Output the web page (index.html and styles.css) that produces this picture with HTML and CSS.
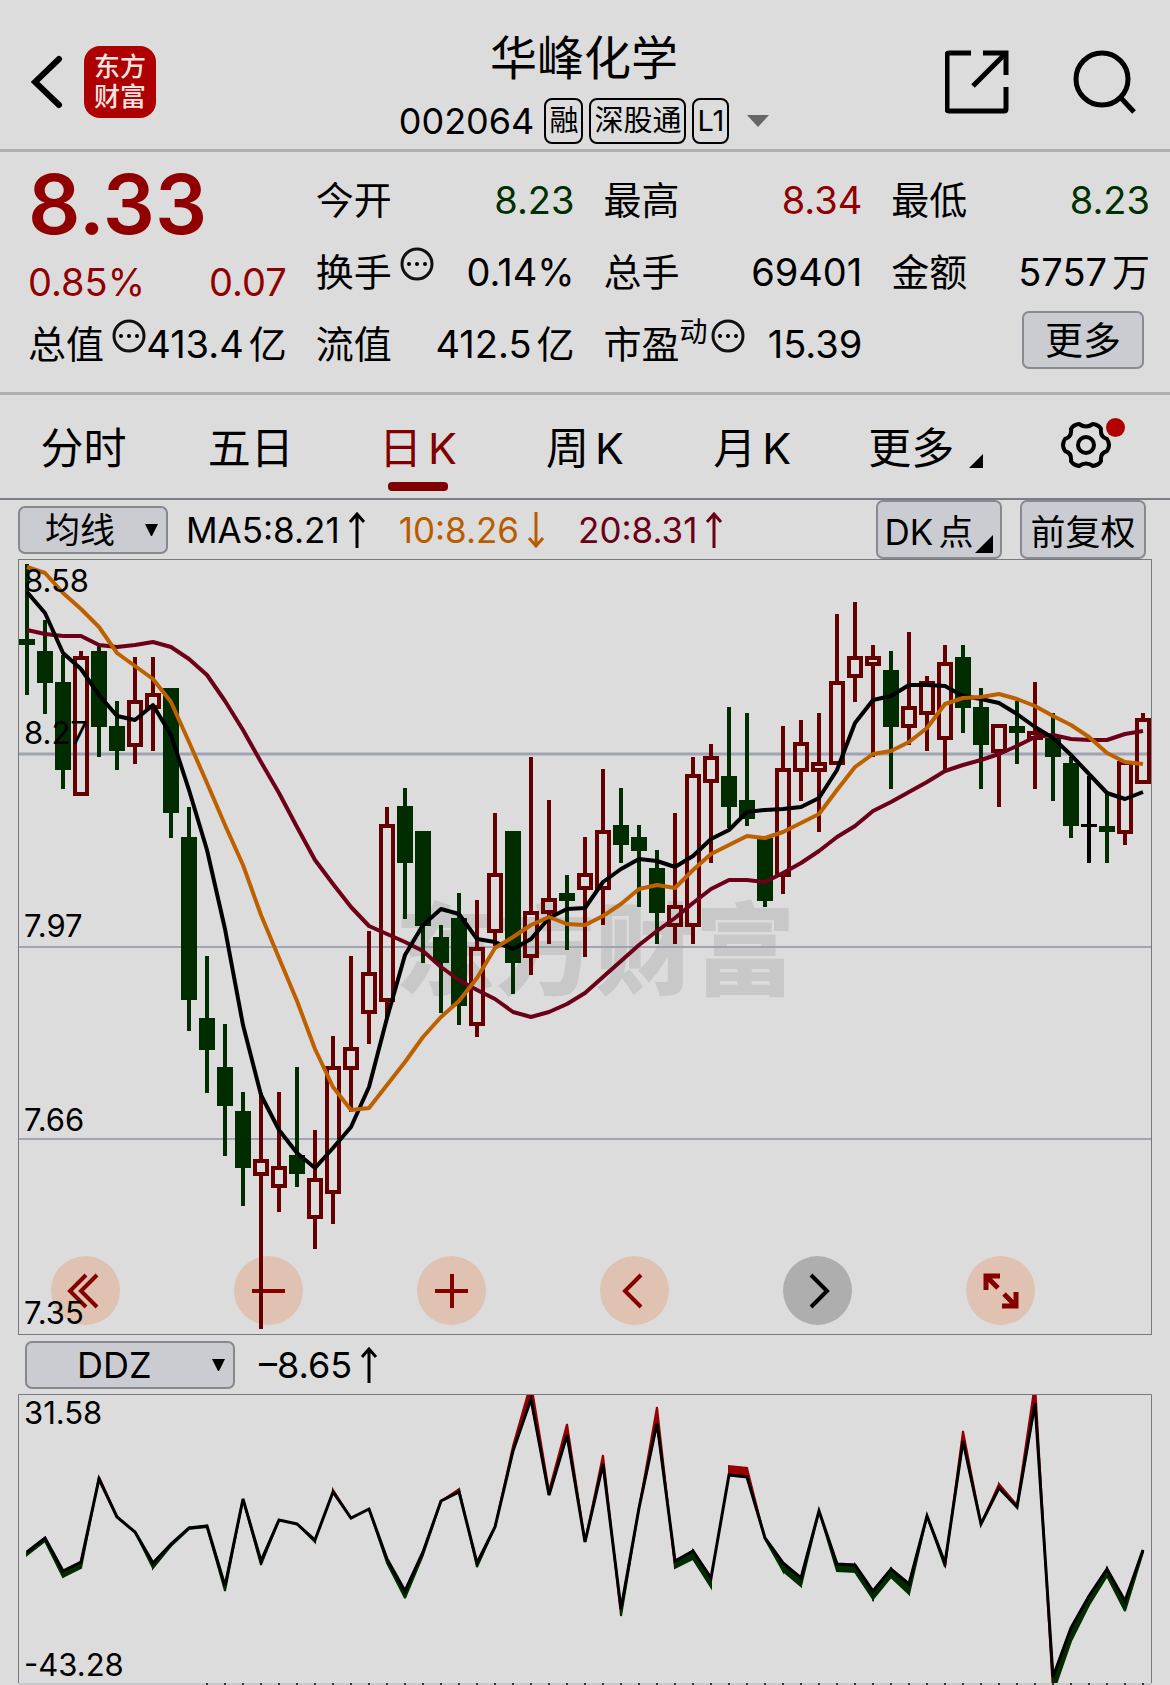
FILE: index.html
```html
<!DOCTYPE html>
<html lang="zh-CN">
<head>
    <meta charset="UTF-8">
    <meta name="viewport" content="width=device-width, initial-scale=1.0">
    <title>华峰化学 002064</title>
    <link rel="stylesheet" href="styles.css">
</head>
<body>

<header class="header">
    <div class="header-left">
        <button class="icon-btn" aria-label="返回">
            <svg width="32" height="54" viewBox="0 0 32 54"><path d="M28 4L4 27L28 50" fill="none" stroke="#000" stroke-width="6" stroke-linecap="round"/></svg>
        </button>
        <div class="logo">东方<br>财富</div>
    </div>
    <div class="header-title">
        <h1>华峰化学</h1>
        <div class="code-row">
            <span class="code">002064</span>
            <span class="tag">融</span>
            <span class="tag">深股通</span>
            <span class="tag">L1</span>
            <svg class="caret" width="22" height="12" viewBox="0 0 22 12"><path d="M0 0H22L11 12Z" fill="#666"/></svg>
        </div>
    </div>
    <div class="header-right">
        <button class="icon-btn" aria-label="分享">
            <svg width="64" height="64" viewBox="0 0 64 64"><path d="M26 3H4Q2 3 2 5V59Q2 61 4 61H59Q61 61 61 59V37M38 3H61V25M61 3L28 36" fill="none" stroke="#000" stroke-width="5"/></svg>
        </button>
        <button class="icon-btn" aria-label="搜索">
            <svg width="64" height="64" viewBox="0 0 64 64"><circle cx="29" cy="29" r="26" fill="none" stroke="#000" stroke-width="5"/><path d="M48 48L61 62" stroke="#000" stroke-width="5"/></svg>
        </button>
    </div>
</header>

<section class="quote">
    <div class="col">
        <div class="price red">8.33</div>
        <div class="cell change red"><span>0.85%</span><span>0.07</span></div>
        <div class="cell total"><span>总值</span><svg class="dots"><use href="#dots"/></svg><span class="val">413.4<i>亿</i></span></div>
    </div>
    <div class="col">
        <div class="cell"><span>今开</span><span class="val green">8.23</span></div>
        <div class="cell"><span>换手</span><svg class="dots"><use href="#dots"/></svg><span class="val">0.14%</span></div>
        <div class="cell"><span>流值</span><span class="val">412.5<i>亿</i></span></div>
    </div>
    <div class="col">
        <div class="cell"><span>最高</span><span class="val red">8.34</span></div>
        <div class="cell"><span>总手</span><span class="val">69401</span></div>
        <div class="cell"><span>市盈</span><sup>动</sup><svg class="dots tight"><use href="#dots"/></svg><span class="val">15.39</span></div>
    </div>
    <div class="col">
        <div class="cell"><span>最低</span><span class="val green">8.23</span></div>
        <div class="cell"><span>金额</span><span class="val">5757<i>万</i></span></div>
        <div class="cell"><button class="btn more">更多</button></div>
    </div>
</section>

<nav class="tabs">
    <button>分时</button>
    <button>五日</button>
    <button class="active">日<i>K</i></button>
    <button>周<i>K</i></button>
    <button>月<i>K</i></button>
    <button class="has-corner">更多<svg class="corner" viewBox="0 0 14 14"><path d="M14 0V14H0Z"/></svg></button>
    <button class="settings" aria-label="设置">
        <svg width="50" height="50" viewBox="0 0 50 50" fill="none" stroke="#000" stroke-width="4">
            <path d="M18 4Q25 9 32 4Q38 5 40 9Q39 17 46 19Q50 25 46 31Q39 33 40 41Q38 45 32 46Q25 41 18 46Q12 45 10 41Q11 33 4 31Q0 25 4 19Q11 17 10 9Q12 5 18 4Z" stroke-linejoin="round"/>
            <circle cx="25" cy="25" r="8"/>
        </svg>
        <span class="badge"></span>
    </button>
</nav>

<div class="toolbar">
    <div class="select ma-select">
        <select aria-label="主图指标"><option>均线</option></select>
        <svg width="13" height="12" viewBox="0 0 13 12"><path d="M0 0H13L7 12H6Z"/></svg>
    </div>
    <span class="ma">MA5:8.21<svg class="arrow"><use href="#up"/></svg></span>
    <span class="ma orange">10:8.26<svg class="arrow"><use href="#down"/></svg></span>
    <span class="ma crimson">20:8.31<svg class="arrow"><use href="#up"/></svg></span>
    <div class="toolbar-right">
        <button class="btn dk">DK<i>点</i><svg class="corner" viewBox="0 0 14 14"><path d="M14 0V14H0Z"/></svg></button>
        <button class="btn">前复权</button>
    </div>
</div>

<main>
    <div class="chart">
        <div class="controls">
            <button aria-label="最早"><svg viewBox="0 0 69 69"><path d="M35 19L19 35L35 51M46 19L30 35L46 51"/></svg></button>
            <button aria-label="缩小"><svg viewBox="0 0 69 69"><path d="M18 35H51"/></svg></button>
            <button aria-label="放大"><svg viewBox="0 0 69 69"><path d="M18 35H51M35 18V52"/></svg></button>
            <button aria-label="向前"><svg viewBox="0 0 69 69"><path d="M41 19L25 35L41 51"/></svg></button>
            <button class="off" aria-label="向后"><svg viewBox="0 0 69 69"><path d="M28 19L44 35L28 51"/></svg></button>
            <button class="full" aria-label="全屏"><svg viewBox="0 0 69 69"><path d="M20 34V20H34M20 20L32 32M50 36V50H36M50 50L38 38"/></svg></button>
        </div>
        <svg id="kline" viewBox="18 559 1134 776">
            <text class="watermark" x="395" y="987">东方财富</text>
            <g class="grid">
                <path d="M19 754H1151" stroke-width="3"/>
                <path d="M19 947H1151M19 1139H1151" stroke-width="2"/>
            </g>
            <g id="candles"></g>
            <g id="averages"></g>
            <g class="axis">
                <text x="24" y="592">8.58</text>
                <text x="24" y="744">8.27</text>
                <text x="24" y="937">7.97</text>
                <text x="24" y="1131">7.66</text>
                <text x="24" y="1324">7.35</text>
            </g>
            <rect class="frame" x="18.5" y="559.5" width="1133" height="775"/>
        </svg>
    </div>

    <div class="toolbar ddz-bar">
        <div class="select ddz-select">
            <select aria-label="副图指标"><option>DDZ</option></select>
            <svg width="13" height="12" viewBox="0 0 13 12"><path d="M0 0H13L7 12H6Z"/></svg>
        </div>
        <span class="ma">–8.65<svg class="arrow"><use href="#up"/></svg></span>
    </div>

    <div class="chart">
        <svg id="ddz" viewBox="18 1393 1134 292">
            <g id="ddz-lines"></g>
            <g class="axis">
                <text x="24" y="1423">31.58</text>
                <text x="24" y="1675">-43.28</text>
            </g>
            <path class="frame" d="M18.5 1682V1393.5H1151.5V1682"/>
            <rect class="strip" x="18" y="1682" width="1134" height="3"/>
            <g id="ticks"></g>
        </svg>
    </div>
</main>

<!-- shared icons -->
<svg class="defs">
    <symbol id="dots" viewBox="0 0 34 34">
        <circle cx="17" cy="17" r="15" fill="none" stroke="#111" stroke-width="3"/>
        <circle cx="9" cy="17" r="2"/><circle cx="17" cy="17" r="2"/><circle cx="25" cy="17" r="2"/>
    </symbol>
    <symbol id="up" viewBox="0 0 18 36"><path d="M9 36V3M2 10L9 2L16 10" fill="none" stroke="currentColor" stroke-width="3"/></symbol>
    <symbol id="down" viewBox="0 0 18 36"><path d="M9 0V33M2 26L9 34L16 26" fill="none" stroke="currentColor" stroke-width="3"/></symbol>
</svg>

<script src="script.js"></script>
</body>
</html>
```
FILE: styles.css
```css
* { box-sizing: border-box; }
body { margin: 0; background: #dcdcdc; color: #000; font-family: Inter, "Noto Sans CJK SC", sans-serif; }
button, select { font: inherit; color: inherit; margin: 0; padding: 0; border: none; background: none; cursor: pointer; }
i { font-style: normal; margin-left: 5px; }
svg { display: block; }
.defs { position: absolute; width: 0; height: 0; }
.red { color: #900000; }
.green { color: #003000; }
.orange { color: #b85c00; }
.crimson { color: #6a0018; }

/* header */
.header { display: grid; grid-template-columns: 1fr auto 1fr; height: 152px; padding: 0 33px 0 31px; border-bottom: 3px solid #b0b0b0; }
.header-left { display: flex; align-items: center; gap: 21px; padding-top: 14px; }
.header-right { display: flex; align-items: center; justify-content: flex-end; gap: 64px; padding-top: 14px; }
.logo { width: 72px; height: 72px; padding: 6px 0; border-radius: 16px; background: #ae0000; color: #f4e4e0; font-size: 26px; line-height: 30px; font-weight: 500; text-align: center; }
.header-title { padding-top: 28px; text-align: center; }
.header-title h1 { margin: 0; font-size: 47px; line-height: 60px; font-weight: 400; }
.code-row { display: flex; align-items: center; gap: 6px; margin-top: 10px; }
.code { font-size: 36px; line-height: 46px; margin-right: 4px; }
.tag { height: 46px; padding: 0 3px; border: 2px solid #000; border-radius: 8px; font-size: 29px; line-height: 42px; }
.caret { margin-left: 12px; }

/* quote numbers */
.quote { display: grid; grid-template-columns: repeat(4, 1fr); gap: 29px; padding: 12px 20px 12px 28px; border-bottom: 3px solid #b0b0b0; font-size: 38px; }
.price { height: 82px; font-size: 82px; line-height: 82px; font-weight: 600; }
.cell { display: flex; align-items: center; height: 72px; line-height: 50px; white-space: nowrap; }
.change { justify-content: space-between; }
.total { height: 62px; padding-bottom: 10px; }
.val { margin-left: auto; }
.dots { flex: none; width: 34px; height: 34px; margin: 0 0 16px 8px; }
.dots.tight { margin-left: 3px; }
sup { font-size: 28px; line-height: 40px; margin-bottom: 24px; }
.btn { border: 2px solid #888a90; border-radius: 7px; background: #cbccd2; }
.more { width: 122px; height: 58px; margin: 0 6px 8px auto; }

/* period tabs */
.tabs { display: grid; grid-template-columns: repeat(7, 1fr); height: 105px; border-bottom: 2px solid #7b7e8a; font-size: 43px; }
.tabs button { position: relative; padding-bottom: 4px; white-space: nowrap; }
.tabs i { margin-left: 6px; }
.tabs .active { color: #800000; }
.tabs .active::after { content: ""; position: absolute; left: calc(50% - 30px); bottom: 7px; width: 60px; height: 9px; border-radius: 4px; background: #800000; }
.tabs .has-corner { padding-right: 16px; }
.has-corner .corner { position: absolute; right: 20px; bottom: 30px; width: 14px; height: 14px; }
.settings svg { margin: 0 auto; }
.badge { position: absolute; left: calc(50% + 20px); top: 23px; width: 19px; height: 19px; border-radius: 50%; background: #b00000; }

/* indicator bars */
.toolbar { display: flex; align-items: center; height: 59px; padding: 0 24px 0 18px; font-size: 35px; }
.select { position: relative; }
.select select { width: 100%; height: 48px; appearance: none; border: 2px solid #85888f; border-radius: 7px; background: #cbccd2; }
.select svg { position: absolute; right: 10px; top: 18px; pointer-events: none; }
.ma-select { width: 150px; margin-right: 18px; }
.ma-select select { padding-left: 25px; }
.ma { display: flex; align-items: center; gap: 8px; margin-right: 33px; }
.arrow { width: 18px; height: 36px; }
.toolbar-right { display: flex; gap: 18px; margin-left: auto; }
.toolbar .btn { position: relative; width: 126px; height: 59px; white-space: nowrap; }
.toolbar .dk { padding-right: 20px; }
.dk .corner { position: absolute; right: 7px; bottom: 4px; width: 18px; height: 18px; }
.ddz-bar { padding-left: 25px; font-size: 36px; }
.ddz-select { width: 210px; margin-right: 24px; }
.ddz-select select { padding-left: 50px; }

/* charts */
.chart { position: relative; margin: 0 18px; }
.chart > svg { position: relative; width: 100%; pointer-events: none; }
.controls { position: absolute; left: 33px; right: 117px; bottom: 10px; display: flex; justify-content: space-between; }
.controls button { width: 69px; height: 69px; border-radius: 50%; background: #dfc2b2; }
.controls path { fill: none; stroke: #860000; stroke-width: 4; }
.controls .off { background: #aeaeae; }
.controls .off path { stroke: #000; }
.controls .full path { stroke-width: 5; }
.grid { stroke: #a0a4b2; }
.frame { fill: none; stroke: #77797d; }
.axis { font-size: 31px; }
.watermark { font-size: 100px; font-weight: 900; fill: #c8c8c8; }
.avg { fill: none; stroke-width: 4; stroke-linejoin: round; }
.strip { fill: #c8c9cd; }
```
FILE: script.js
```js
const X0 = 27;
const STEP = 18;
const RED = '#640000', GREEN = '#002c00';

// colour, high, body top, body bottom, low
const candles = [
    ['g', 564, 639, 645, 695], ['g', 620, 651, 683, 714], ['g', 655, 682, 770, 789], ['r', 651, 656, 796, 796],
    ['g', 646, 651, 727, 757], ['g', 701, 726, 751, 770], ['r', 657, 700, 747, 764], ['r', 657, 693, 709, 751],
    ['g', 688, 688, 813, 838], ['g', 807, 837, 1000, 1031], ['g', 956, 1018, 1050, 1093], ['g', 1024, 1067, 1106, 1156],
    ['g', 1092, 1111, 1168, 1206], ['r', 1093, 1159, 1176, 1329], ['r', 1092, 1166, 1188, 1212], ['g', 1067, 1155, 1174, 1187],
    ['r', 1130, 1178, 1219, 1249], ['r', 1036, 1066, 1194, 1224], ['r', 956, 1047, 1070, 1112], ['r', 931, 972, 1014, 1044],
    ['r', 807, 824, 1002, 1019], ['g', 788, 806, 863, 919], ['g', 831, 831, 926, 963], ['g', 925, 937, 963, 1013],
    ['g', 893, 918, 1006, 1025], ['r', 900, 947, 1026, 1037], ['r', 813, 873, 933, 946], ['g', 831, 831, 963, 994],
    ['r', 757, 911, 958, 975], ['r', 800, 898, 914, 944], ['g', 875, 893, 901, 950], ['r', 837, 873, 890, 957],
    ['r', 769, 830, 890, 925], ['g', 788, 825, 845, 863], ['g', 825, 837, 851, 907], ['g', 850, 868, 913, 944],
    ['r', 813, 905, 927, 944], ['r', 757, 774, 927, 944], ['r', 744, 756, 783, 863], ['g', 707, 776, 807, 828],
    ['g', 713, 800, 819, 826], ['g', 838, 838, 901, 907], ['r', 726, 768, 877, 894], ['r', 720, 742, 772, 801],
    ['r', 713, 762, 772, 832], ['r', 614, 681, 765, 765], ['r', 602, 656, 678, 702], ['r', 645, 656, 666, 757],
    ['g', 651, 670, 727, 789], ['r', 632, 706, 728, 745], ['r', 676, 681, 715, 751], ['r', 645, 662, 740, 770],
    ['g', 645, 657, 708, 733], ['g', 688, 707, 745, 789], ['r', 724, 724, 753, 807], ['g', 701, 726, 733, 764],
    ['r', 682, 731, 740, 789], ['g', 713, 738, 757, 801], ['g', 757, 763, 826, 838], ['k', 776, 824, 827, 863],
    ['g', 794, 826, 832, 863], ['r', 761, 761, 834, 845], ['r', 713, 718, 784, 784]
];

const ma5 = [592, 613, 653, 669, 695, 716, 720, 705, 735, 790, 850, 929, 1025, 1095, 1130, 1153, 1168, 1148, 1127, 1087, 1018,
    955, 925, 909, 914, 939, 942, 949, 939, 918, 909, 908, 882, 869, 859, 861, 867, 856, 839, 830, 812, 810, 809, 807, 798, 770,
    723, 700, 696, 685, 685, 686, 696, 699, 703, 714, 727, 738, 755, 774, 793, 799, 792];
const ma10 = [567, 573, 593, 609, 627, 653, 666, 679, 702, 742, 783, 825, 865, 915, 958, 1001, 1049, 1087, 1110, 1108, 1085,
    1062, 1037, 1017, 1001, 978, 948, 937, 925, 917, 924, 925, 916, 904, 889, 885, 888, 870, 854, 845, 836, 838, 832, 823, 814, 790,
    767, 754, 751, 742, 728, 704, 698, 697, 694, 699, 706, 716, 725, 737, 753, 762, 764];
const ma20 = [630, 634, 636, 636, 645, 647, 645, 642, 647, 659, 675, 701, 730, 762, 793, 827, 860, 884, 907, 926, 934,
    942, 951, 967, 980, 990, 999, 1012, 1017, 1012, 1004, 993, 977, 961, 945, 931, 918, 903, 889, 880, 880, 882, 873, 863, 851, 837,
    826, 811, 802, 792, 782, 771, 765, 760, 754, 746, 737, 735, 739, 740, 740, 734, 731];

// DDZ line, then the distance to its edge (negative = red, above the line)
const ddz = [1551, 1537, 1570, 1561, 1478, 1516, 1531, 1562, 1543, 1527, 1525, 1585, 1498, 1560, 1519, 1523, 1539, 1491, 1517, 1508, 1558,
    1590, 1551, 1500, 1491, 1562, 1526, 1450, 1398, 1494, 1434, 1541, 1463, 1608, 1507, 1422, 1560, 1550, 1577, 1474, 1476, 1537, 1562, 1577, 1510, 1563,
    1564, 1590, 1568, 1583, 1515, 1562, 1440, 1523, 1487, 1506, 1402, 1676, 1627, 1595, 1568, 1600, 1549];
const edge = [3, 3, 6, 6, -2, 0, 0, 5, 2, 1, 1, 5, 0, 4, 0, 0, 2, -2, 0, 0, 4,
    7, 3, 0, -3, 4, 0, -5, -16, -4, -11, 0, -9, 7, 0, -16, 7, 8, 9, -9, -9, 1, 8, 8, 0, 7,
    7, 8, 8, 10, 0, 4, -10, 0, -4, -2, -20, 16, 13, 9, 7, 10, 2];

function x(i) {
    return X0 + STEP * i;
}

function line(values) {
    return values.map((y, i) => `${x(i)},${y}`).join(' ');
}

function drawCandles() {
    let html = '';
    candles.forEach(([type, high, top, bottom, low], i) => {
        const cx = x(i);
        if (type === 'r') {
            html += `<path d="M${cx} ${high}V${top}M${cx} ${bottom}V${low}" stroke="${RED}" stroke-width="4"/>`;
            html += `<rect x="${cx - 6}" y="${top + 2}" width="12" height="${bottom - top - 4}" fill="none" stroke="${RED}" stroke-width="4"/>`;
        } else {
            const color = type === 'g' ? GREEN : '#000';
            html += `<path d="M${cx} ${high}V${low}" stroke="${color}" stroke-width="4"/>`;
            html += `<rect x="${cx - 8}" y="${top}" width="16" height="${bottom - top}" fill="${color}"/>`;
        }
    });
    document.getElementById('candles').innerHTML = html;
}

function drawAverages() {
    document.getElementById('averages').innerHTML =
        `<polyline class="avg" stroke="#6c0018" points="${line(ma20)}"/>` +
        `<polyline class="avg" stroke="#000" points="${line(ma5)}"/>` +
        `<polyline class="avg" stroke="#bd6000" points="${line(ma10)}"/>`;
}

function drawDdz() {
    let html = '';
    for (let i = 0; i < ddz.length - 1; i++) {
        const sum = edge[i] + edge[i + 1];
        if (sum === 0) continue;
        const color = sum < 0 ? '#960000' : GREEN;
        html += `<polygon fill="${color}" stroke="${color}" stroke-width="2" points="${x(i)},${ddz[i]} ${x(i + 1)},${ddz[i + 1]} ${x(i + 1)},${ddz[i + 1] + edge[i + 1]} ${x(i)},${ddz[i] + edge[i]}"/>`;
    }
    html += `<polyline fill="none" stroke="#000" stroke-width="3" points="${line(ddz)}"/>`;
    document.getElementById('ddz-lines').innerHTML = html;

    let ticks = '';
    for (let i = 10; i < ddz.length; i++) {
        ticks += `<path d="M${x(i)} 1682V1685" stroke="#333" stroke-width="2"/>`;
    }
    document.getElementById('ticks').innerHTML = ticks;
}

drawCandles();
drawAverages();
drawDdz();
```
